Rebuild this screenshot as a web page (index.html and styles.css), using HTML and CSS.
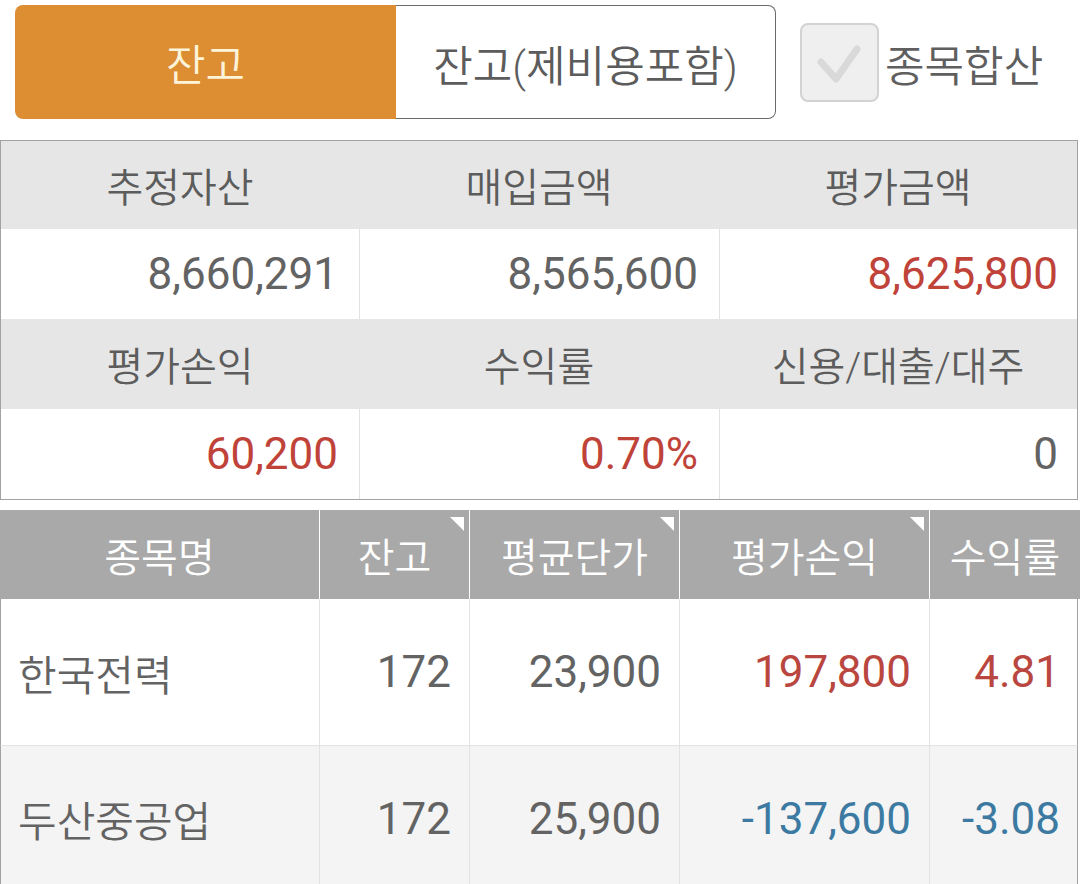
FILE: index.html
```html
<!DOCTYPE html>
<html lang="ko">
<head>
<meta charset="utf-8">
<title>잔고</title>
<link rel="stylesheet" href="styles.css">
</head>
<body>
<div class="top">
  <div class="seg">
    <div class="tab active">잔고</div>
    <div class="tab">잔고(제비용포함)</div>
  </div>
  <div class="chk">
    <span class="box">
      <svg width="75" height="75" viewBox="0 0 75 75"><polyline points="19,37 34,54 55,24" fill="none" stroke="#d9d9d9" stroke-width="7" stroke-linecap="round" stroke-linejoin="round"/></svg>
    </span>
    <span class="chk-label">종목합산</span>
  </div>
</div>

<div class="summary">
  <div class="srow head head1"><div class="sc">추정자산</div><div class="sc">매입금액</div><div class="sc">평가금액</div></div>
  <div class="srow val"><div class="sc">8,660,291</div><div class="sc">8,565,600</div><div class="sc up">8,625,800</div></div>
  <div class="srow head"><div class="sc">평가손익</div><div class="sc">수익률</div><div class="sc">신용/대출/대주</div></div>
  <div class="srow val"><div class="sc up">60,200</div><div class="sc up">0.70%</div><div class="sc">0</div></div>
</div>

<div class="list">
  <div class="lhead">
    <div class="hc">종목명</div>
    <div class="hc sort">잔고</div>
    <div class="hc sort">평균단가</div>
    <div class="hc sort">평가손익</div>
    <div class="hc">수익률</div>
  </div>
  <div class="lrow">
    <div class="lc name">한국전력</div>
    <div class="lc">172</div>
    <div class="lc">23,900</div>
    <div class="lc up2">197,800</div>
    <div class="lc up2">4.81</div>
  </div>
  <div class="lrow alt">
    <div class="lc name">두산중공업</div>
    <div class="lc">172</div>
    <div class="lc">25,900</div>
    <div class="lc down">-137,600</div>
    <div class="lc down">-3.08</div>
  </div>
</div>
</body>
</html>
```

FILE: styles.css
```css
html, body {
  margin: 0;
  padding: 0;
  background: #ffffff;
}
body {
  width: 1080px;
  height: 884px;
  overflow: hidden;
  font-family: Roboto, "Noto Sans CJK KR", sans-serif;
  color: #616161;
}

/* top bar */
.top {
  display: flex;
  align-items: center;
  padding: 5px 0 0 15px;
  height: 114px;
}
.seg {
  display: flex;
  width: 761px;
  height: 114px;
}
.tab {
  display: flex;
  align-items: center;
  justify-content: center;
  box-sizing: border-box;
  height: 114px;
  font-size: 43px;
  font-weight: 350;
}
.tab.active {
  width: 381px;
  background: #dd8e33;
  color: #fcf3d8;
  border-radius: 8px 0 0 8px;
}
.tab:not(.active) {
  flex: 1;
  border: 1px solid #6a6a6a;
  border-left: none;
  border-radius: 0 8px 8px 0;
  color: #5c5c5c;
  padding-top: 2px;
}
.chk {
  display: flex;
  align-items: center;
  margin-left: 24px;
  margin-top: 1px;
}
.box {
  display: block;
  width: 75px;
  height: 75px;
  border: 2px solid #d3d3d3;
  border-radius: 8px;
  background: #efefef;
}
.box svg { display: block; }
.chk-label {
  margin-left: 6px;
  font-size: 43px;
  font-weight: 350;
  color: #5f5f5f;
}

/* summary */
.summary {
  box-sizing: border-box;
  width: 1078px;
  margin-top: 21px;
  border: 1px solid #a2a2a2;
}
.srow {
  display: grid;
  grid-template-columns: 358px 360px 1fr;
  height: 90px;
}
.srow.head1 { height: 88px; }
.srow.head {
  background: #e6e6e6;
}
.srow.head .sc {
  display: flex;
  align-items: center;
  justify-content: center;
  font-size: 40px;
  font-weight: 350;
  color: #5c5c5c;
}
.srow.val .sc {
  display: flex;
  align-items: center;
  justify-content: flex-end;
  padding-right: 21px;
  font-size: 44px;
  color: #636363;
}
.srow.val .sc:last-child {
  padding-right: 19px;
}
.srow.val .sc + .sc {
  border-left: 1px solid #e2e2e2;
}
.srow.val .sc.up { color: #c0433a; }

/* list */
.list {
  margin-top: 10px;
  width: 1080px;
}
.lhead {
  display: grid;
  grid-template-columns: 319px 150px 210px 250px 1fr;
  height: 89px;
  background: #a9a9a9;
}
.hc {
  position: relative;
  display: flex;
  align-items: center;
  justify-content: center;
  font-size: 40px;
  font-weight: 350;
  color: #ffffff;
}
.hc + .hc {
  border-left: 1px solid #ffffff;
}
.hc.sort::after {
  content: "";
  position: absolute;
  top: 7px;
  right: 5px;
  width: 0;
  height: 0;
  border-top: 14px solid #ffffff;
  border-left: 14px solid transparent;
}
.lrow {
  box-sizing: border-box;
  display: grid;
  grid-template-columns: 318px 150px 210px 250px 1fr;
  width: 1078px;
  height: 146px;
  border-left: 1px solid #a2a2a2;
  border-right: 1px solid #a2a2a2;
  background: #ffffff;
}
.lrow.alt {
  background: #f4f4f4;
  border-top: 1px solid #e3e3e3;
}
.lc {
  display: flex;
  align-items: center;
  justify-content: flex-end;
  padding-right: 18px;
  font-size: 44px;
  color: #636363;
}
.lc:last-child { padding-right: 17px; }
.lc + .lc {
  border-left: 1px solid #e3e3e3;
}
.lc.name {
  justify-content: flex-start;
  padding-left: 17px;
  padding-right: 0;
  font-size: 42px;
  font-weight: 350;
}
.lc.up2 { color: #b9463f; }
.lc.down { color: #3c7aa2; }
```
